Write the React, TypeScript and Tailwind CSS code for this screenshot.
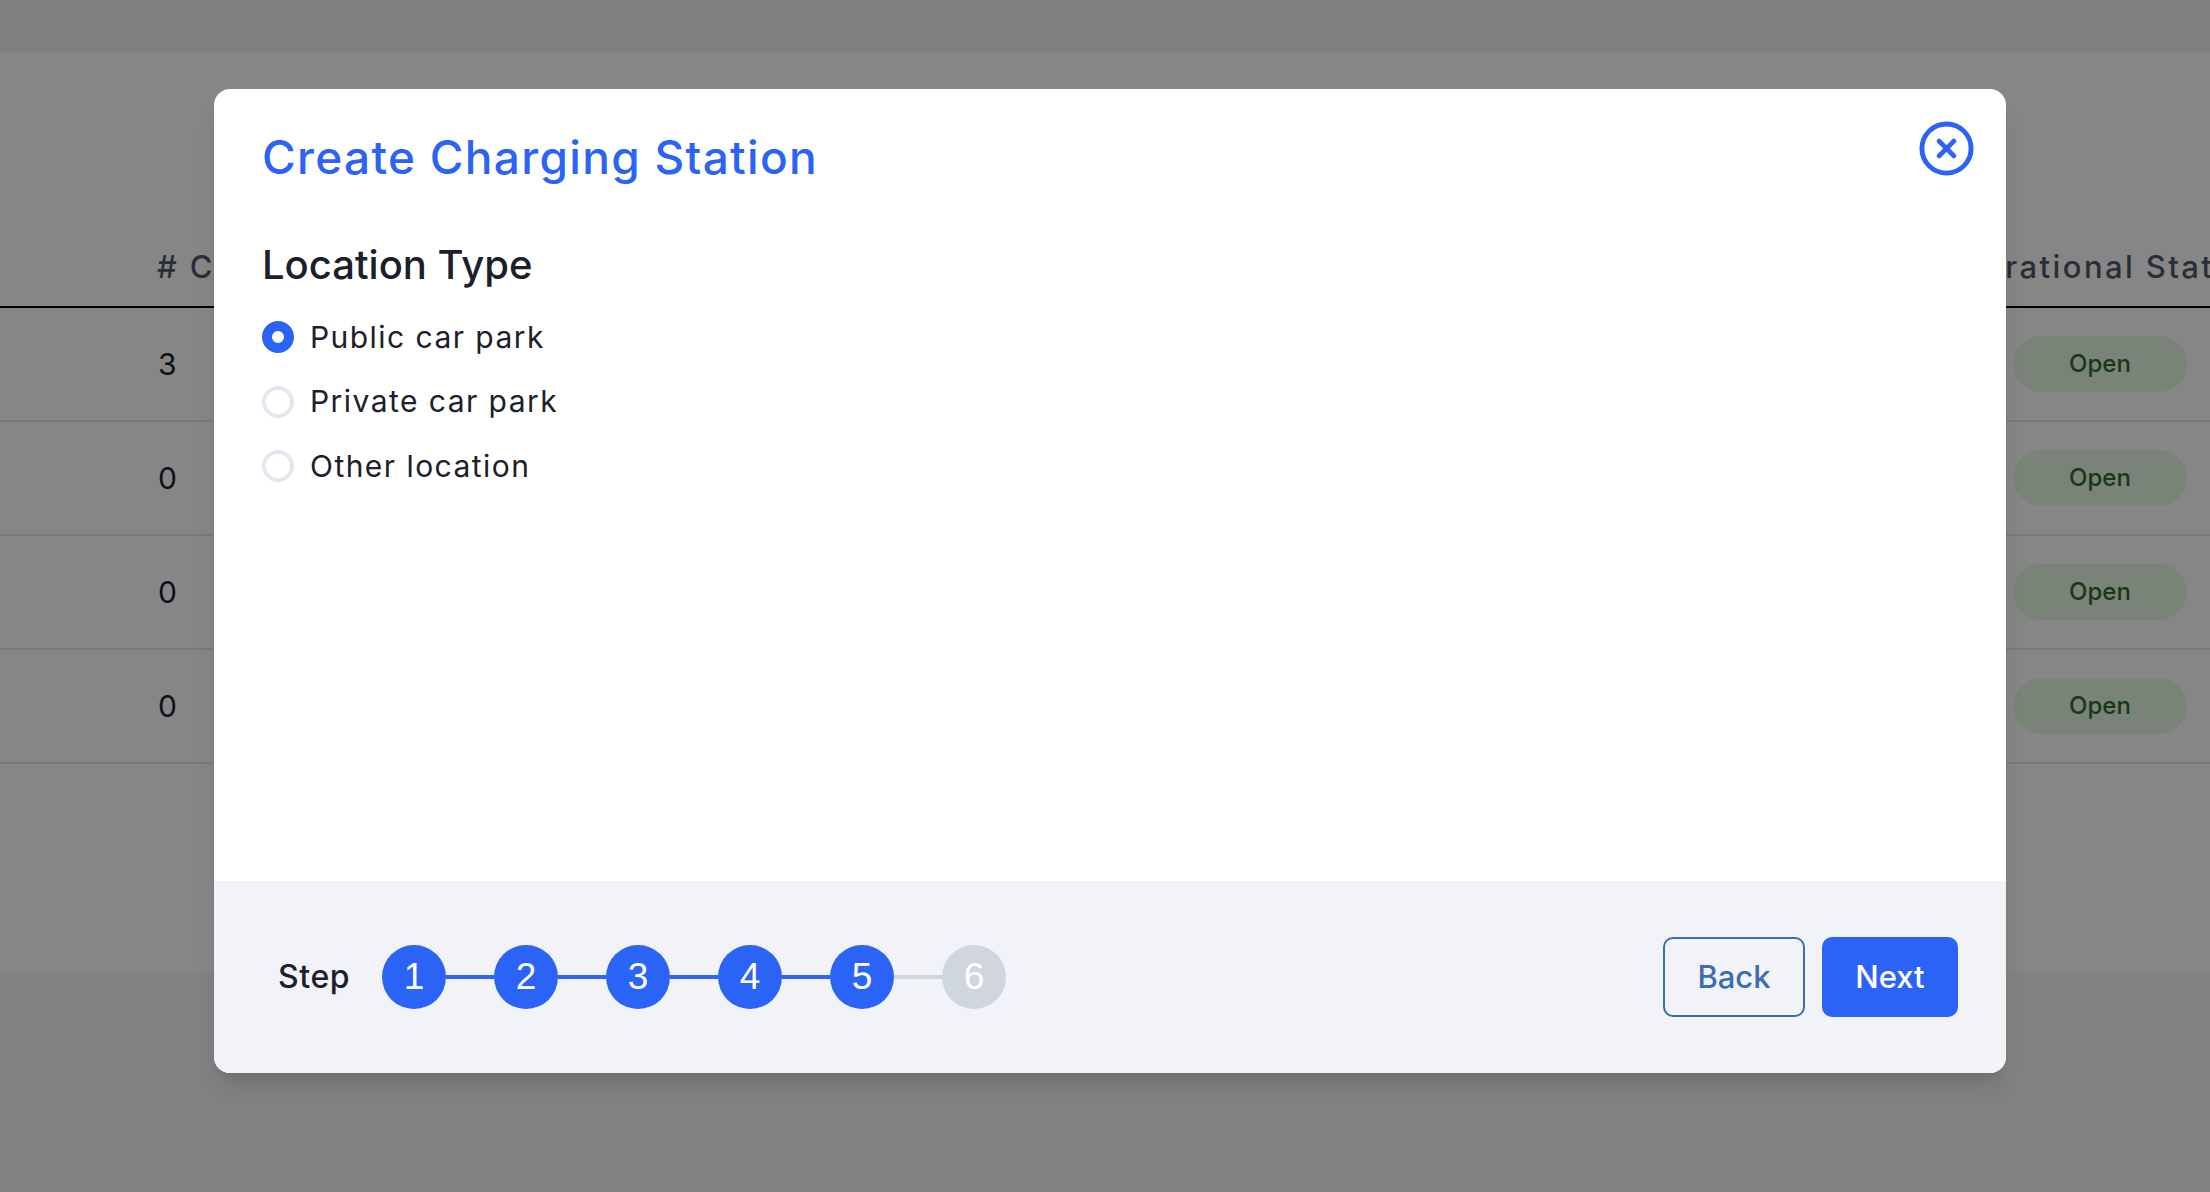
import { CircleX } from "lucide-react";

const rows = [3, 0, 0, 0];
const options = ["Public car park", "Private car park", "Other location"];
const steps = [1, 2, 3, 4, 5, 6];
const currentStep = 5;

const BackgroundTable = () => (
  <div className="h-full flex flex-col bg-[#f8f8f8]">
    <div className="h-[52px] bg-[#f4f4f4]" />
    <div className="h-[920px] bg-white">
      <div className="h-[256px] grid grid-cols-[1780px_1fr] pl-[157px] items-end border-b-2 border-black pb-[16px] text-[31px] font-medium tracking-[2.4px] text-[#4f596b] whitespace-nowrap">
        <span># Chargers</span>
        <span>Operational Status</span>
      </div>
      {rows.map((count, index) => (
        <div
          key={index}
          className="h-[114px] grid grid-cols-[1780px_1fr] pl-[158px] items-center border-b-2 border-[#e5e7eb]"
        >
          <span className="text-[30px] text-[#1f2430]">{count}</span>
          <span className="ml-[75px] w-[174px] h-[56px] rounded-[28px] bg-[#e8fae5] flex items-center justify-center text-[24px] font-medium text-[#2f6b2f]">
            Open
          </span>
        </div>
      ))}
    </div>
  </div>
);

const Stepper = () => (
  <div className="flex items-center">
    <span className="w-[104px] text-[32px] tracking-[0.6px] font-medium text-[#1b202b]">Step</span>
    {steps.map((step, index) => (
      <div key={step} className="flex items-center">
        {index > 0 && (
          <div className={step <= currentStep ? "w-[48px] h-[4px] bg-[#2b63f7]" : "w-[48px] h-[4px] bg-[#cfd6df]"} />
        )}
        <div
          className={
            step <= currentStep
              ? "w-[64px] h-[64px] rounded-full bg-[#2b63f7] flex items-center justify-center text-[37px] text-white font-['Liberation_Sans',sans-serif]"
              : "w-[64px] h-[64px] rounded-full bg-[#cfd6df] flex items-center justify-center text-[37px] text-white font-['Liberation_Sans',sans-serif]"
          }
        >
          {step}
        </div>
      </div>
    ))}
  </div>
);

export default function App() {
  return (
    <div className="relative h-screen w-full overflow-hidden font-['Inter',sans-serif]">
      <BackgroundTable />
      <div className="absolute inset-0 bg-black/[0.475] pt-[89px] pl-[214px]">
        <div className="relative w-[1792px] h-[984px] rounded-2xl overflow-hidden bg-white shadow-xl flex flex-col">
          <button className="absolute right-[30px] top-[30px] text-[#2b63f7]">
            <CircleX size={59} strokeWidth={2} />
          </button>
          <div className="flex-1 pl-[48px] pt-[38px]">
            <h2 className="text-[46px] tracking-[1.3px] font-medium leading-[60px] text-[#2b63f7]">Create Charging Station</h2>
            <h3 className="mt-[53px] text-[40px] font-medium leading-[50px] text-[#1b202b]">Location Type</h3>
            <div className="mt-[27px] flex flex-col gap-[24.5px]">
              {options.map((option, index) => (
                <label key={option} className="flex items-center gap-[16px] h-[40px]">
                  {index === 0 ? (
                    <span className="w-[32px] h-[32px] rounded-full border-[10px] border-[#2b63f7] bg-white" />
                  ) : (
                    <span className="w-[32px] h-[32px] rounded-full border-[4px] border-[#e2e8f0] bg-white" />
                  )}
                  <span className="text-[30px] tracking-[1.45px] text-[#1b202b]">{option}</span>
                </label>
              ))}
            </div>
          </div>
          <div className="h-[192px] bg-[#f2f3f9] flex items-center justify-between pl-[64px] pr-[48px]">
            <Stepper />
            <div className="flex items-center gap-[17px]">
              <button className="w-[142px] h-[80px] rounded-[10px] border-2 border-[#3b6db0] text-[31px] font-medium text-[#3b6db0]">
                Back
              </button>
              <button className="w-[136px] h-[80px] rounded-[10px] bg-[#2b63f7] text-[31px] font-medium text-white">
                Next
              </button>
            </div>
          </div>
        </div>
      </div>
    </div>
  );
}
